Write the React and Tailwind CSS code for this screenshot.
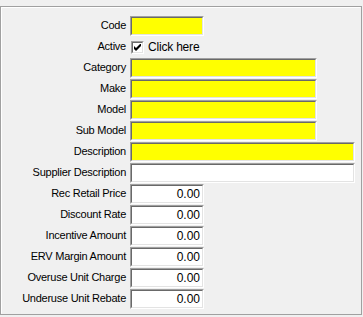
const textRows = [
  { label: 'Category', w: 'w-[187px]', yellow: true },
  { label: 'Make', w: 'w-[187px]', yellow: true },
  { label: 'Model', w: 'w-[187px]', yellow: true },
  { label: 'Sub Model', w: 'w-[187px]', yellow: true },
  { label: 'Description', w: 'w-[225px]', yellow: true },
  { label: 'Supplier Description', w: 'w-[225px]', yellow: false },
]

const numberRows = [
  'Rec Retail Price',
  'Discount Rate',
  'Incentive Amount',
  'ERV Margin Amount',
  'Overuse Unit Charge',
  'Underuse Unit Rebate',
]

function Box({ className, yellow, children }) {
  return (
    <div
      className={`h-[20px] border border-t-[#a0a0a0] border-l-[#a0a0a0] border-b-white border-r-white ${className}`}
    >
      <div
        className={`h-full border border-t-[#696969] border-l-[#696969] border-b-[#e3e3e3] border-r-[#e3e3e3] flex items-center justify-end pr-[2px] ${
          yellow ? 'bg-[#ffff00]' : 'bg-white'
        }`}
      >
        {children}
      </div>
    </div>
  )
}

function Row({ label, children }) {
  return (
    <div className="flex items-center h-[20px] gap-[4px]">
      <span className="w-[124px] text-right leading-none pb-[1px] tracking-[-0.25px]">{label}</span>
      {children}
    </div>
  )
}

export default function App() {
  return (
    <div
      className="w-[363px] h-[317px] bg-[#f0f0f0] text-black text-[11px] pt-[6px]"
      style={{ fontFamily: '"Liberation Sans", Arial, sans-serif' }}
    >
      <div className="w-[362px] h-[309px] border border-[#a0a0a0]">
        <div className="h-full border border-t-white border-l-white border-b-[#f0f0f0] border-r-[#f0f0f0] pt-[8px] flex flex-col gap-[1px]">
          <Row label="Code">
            <Box className="w-[74px]" yellow />
          </Row>
          <Row label="Active">
            <div className="flex items-center gap-[4px]">
              <div className="w-[13px] h-[13px] ml-[1px] border border-t-[#a0a0a0] border-l-[#a0a0a0] border-b-white border-r-white">
                <div className="w-full h-full border border-t-[#696969] border-l-[#696969] border-b-[#e3e3e3] border-r-[#e3e3e3] bg-white flex items-center justify-center">
                  <svg width="7" height="7" viewBox="0 0 7 7">
                    <path d="M0 2 L0 5 L2 7 L7 2 L7 -1 L2 4 Z" fill="#000" />
                  </svg>
                </div>
              </div>
              <span className="text-[12px] tracking-[-0.2px]">Click here</span>
            </div>
          </Row>
          {textRows.map((r) => (
            <Row key={r.label} label={r.label}>
              <Box className={r.w} yellow={r.yellow} />
            </Row>
          ))}
          {numberRows.map((l) => (
            <Row key={l} label={l}>
              <Box className="w-[74px]">
                <span className="text-[12px]">0.00</span>
              </Box>
            </Row>
          ))}
        </div>
      </div>
    </div>
  )
}
